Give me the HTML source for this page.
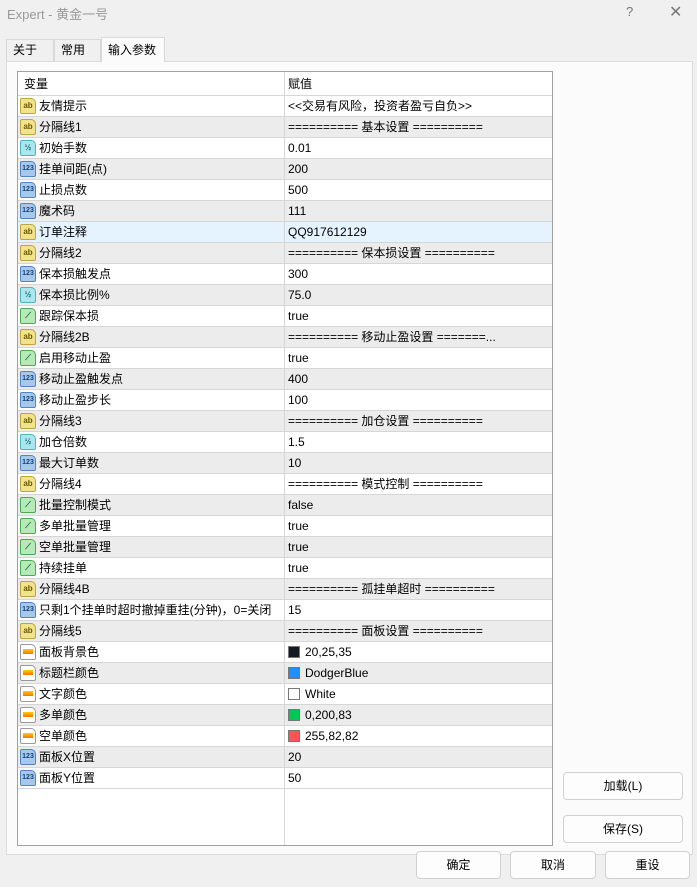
<!DOCTYPE html>
<html><head><meta charset="utf-8"><style>
*{box-sizing:border-box;margin:0;padding:0}
body{width:697px;height:887px;background:#f0f0f0;font-family:"Liberation Sans","Noto Sans CJK SC",sans-serif;font-size:12px;color:#000;position:relative;overflow:hidden}
.title{position:absolute;left:7px;top:4px;color:#999;font-size:13px}
.tq{position:absolute;left:626px;top:4px;color:#777;font-size:13px}
.tx{position:absolute;left:669px;top:2px;color:#777;font-size:16px}
.tab{position:absolute;top:39px;height:22px;border:1px solid #d9d9d9;border-bottom:none;background:#f0f0f0;padding:0 6px;line-height:21px;font-size:12px}
.tab.act{background:#fbfbfb;top:37px;height:25px;line-height:24px}
.panel{position:absolute;left:6px;top:61px;width:687px;height:794px;background:#fbfbfb;border:1px solid #dcdcdc}
.tbl{position:absolute;left:17px;top:71px;width:536px;height:775px;background:#fff;border:1px solid #a0a0a0}
.row{position:absolute;left:0;width:534px;height:21px;border-bottom:1px solid #d6d6d6;line-height:20px}
.row.g{background:#ececec}
.row.sel{background:#e5f3ff}
.c1{position:absolute;left:21px;top:0;white-space:nowrap;line-height:20px}
.c2{position:absolute;left:270px;top:0;white-space:nowrap;line-height:20px}
.div{position:absolute;left:266px;top:0;width:1px;height:773px;background:#d6d6d6}
.ic{position:absolute;left:2px;top:2px;width:16px;height:16px;border-radius:2px 5px 2px 2px;font-size:8px;font-weight:bold;text-align:center;line-height:14px;font-style:normal}
.y{background:#f1e28c;border:1px solid #c0a440;color:#6b5400}
.c{background:#a9e6ee;border:1px solid #4fb3c2;color:#1b6d7a}
.b{background:#a7c8ea;border:1px solid #4f86c0;color:#10427a;font-size:7px}
.gr{background:#b6e8b9;border:1px solid #4aaa52;color:#116b18}
.o{background:#fff;border:1px solid #999}
.o::after{content:"";position:absolute;left:2px;top:4px;width:10px;height:5px;background:linear-gradient(#ffd000,#ff7000)}
.sw{display:inline-block;width:12px;height:12px;border:1px solid #777;vertical-align:-2px;margin-right:5px}
.btn{position:absolute;height:28px;border:1px solid #d0d0d0;border-radius:4px;background:#fdfdfd;text-align:center;line-height:26px;font-size:12px}
</style></head><body>
<div class="title">Expert - 黄金一号</div>
<div class="tq">?</div><div class="tx">✕</div>
<div class="tab" style="left:6px;width:48px">关于</div>
<div class="tab" style="left:54px;width:47px">常用</div>
<div class="panel"></div>
<div class="tab act" style="left:101px;width:64px">输入参数</div>
<div class="tbl">
<div class="row" style="top:0;height:24px;line-height:24px"><span class="c1" style="left:6px;line-height:24px">变量</span><span class="c2" style="line-height:24px">赋值</span></div>
<div class="row" style="top:24px"><i class="ic y">ab</i><span class="c1">友情提示</span><span class="c2">&lt;&lt;交易有风险，投资者盈亏自负&gt;&gt;</span></div>
<div class="row g" style="top:45px"><i class="ic y">ab</i><span class="c1">分隔线1</span><span class="c2">========== 基本设置 ==========</span></div>
<div class="row" style="top:66px"><i class="ic c">½</i><span class="c1">初始手数</span><span class="c2">0.01</span></div>
<div class="row g" style="top:87px"><i class="ic b">123</i><span class="c1">挂单间距(点)</span><span class="c2">200</span></div>
<div class="row" style="top:108px"><i class="ic b">123</i><span class="c1">止损点数</span><span class="c2">500</span></div>
<div class="row g" style="top:129px"><i class="ic b">123</i><span class="c1">魔术码</span><span class="c2">111</span></div>
<div class="row sel" style="top:150px"><i class="ic y">ab</i><span class="c1">订单注释</span><span class="c2">QQ917612129</span></div>
<div class="row g" style="top:171px"><i class="ic y">ab</i><span class="c1">分隔线2</span><span class="c2">========== 保本损设置 ==========</span></div>
<div class="row" style="top:192px"><i class="ic b">123</i><span class="c1">保本损触发点</span><span class="c2">300</span></div>
<div class="row g" style="top:213px"><i class="ic c">½</i><span class="c1">保本损比例%</span><span class="c2">75.0</span></div>
<div class="row" style="top:234px"><i class="ic gr">⟋</i><span class="c1">跟踪保本损</span><span class="c2">true</span></div>
<div class="row g" style="top:255px"><i class="ic y">ab</i><span class="c1">分隔线2B</span><span class="c2">========== 移动止盈设置 =======...</span></div>
<div class="row" style="top:276px"><i class="ic gr">⟋</i><span class="c1">启用移动止盈</span><span class="c2">true</span></div>
<div class="row g" style="top:297px"><i class="ic b">123</i><span class="c1">移动止盈触发点</span><span class="c2">400</span></div>
<div class="row" style="top:318px"><i class="ic b">123</i><span class="c1">移动止盈步长</span><span class="c2">100</span></div>
<div class="row g" style="top:339px"><i class="ic y">ab</i><span class="c1">分隔线3</span><span class="c2">========== 加仓设置 ==========</span></div>
<div class="row" style="top:360px"><i class="ic c">½</i><span class="c1">加仓倍数</span><span class="c2">1.5</span></div>
<div class="row g" style="top:381px"><i class="ic b">123</i><span class="c1">最大订单数</span><span class="c2">10</span></div>
<div class="row" style="top:402px"><i class="ic y">ab</i><span class="c1">分隔线4</span><span class="c2">========== 模式控制 ==========</span></div>
<div class="row g" style="top:423px"><i class="ic gr">⟋</i><span class="c1">批量控制模式</span><span class="c2">false</span></div>
<div class="row" style="top:444px"><i class="ic gr">⟋</i><span class="c1">多单批量管理</span><span class="c2">true</span></div>
<div class="row g" style="top:465px"><i class="ic gr">⟋</i><span class="c1">空单批量管理</span><span class="c2">true</span></div>
<div class="row" style="top:486px"><i class="ic gr">⟋</i><span class="c1">持续挂单</span><span class="c2">true</span></div>
<div class="row g" style="top:507px"><i class="ic y">ab</i><span class="c1">分隔线4B</span><span class="c2">========== 孤挂单超时 ==========</span></div>
<div class="row" style="top:528px"><i class="ic b">123</i><span class="c1">只剩1个挂单时超时撤掉重挂(分钟)，0=关闭</span><span class="c2">15</span></div>
<div class="row g" style="top:549px"><i class="ic y">ab</i><span class="c1">分隔线5</span><span class="c2">========== 面板设置 ==========</span></div>
<div class="row" style="top:570px"><i class="ic o"></i><span class="c1">面板背景色</span><span class="c2"><i class="sw" style="background:#141923"></i>20,25,35</span></div>
<div class="row g" style="top:591px"><i class="ic o"></i><span class="c1">标题栏颜色</span><span class="c2"><i class="sw" style="background:#1e90ff"></i>DodgerBlue</span></div>
<div class="row" style="top:612px"><i class="ic o"></i><span class="c1">文字颜色</span><span class="c2"><i class="sw" style="background:#fff"></i>White</span></div>
<div class="row g" style="top:633px"><i class="ic o"></i><span class="c1">多单颜色</span><span class="c2"><i class="sw" style="background:#00c853"></i>0,200,83</span></div>
<div class="row" style="top:654px"><i class="ic o"></i><span class="c1">空单颜色</span><span class="c2"><i class="sw" style="background:#ff5252"></i>255,82,82</span></div>
<div class="row g" style="top:675px"><i class="ic b">123</i><span class="c1">面板X位置</span><span class="c2">20</span></div>
<div class="row" style="top:696px"><i class="ic b">123</i><span class="c1">面板Y位置</span><span class="c2">50</span></div>
<div class="div"></div>
</div>
<div class="btn" style="left:563px;top:772px;width:120px">加载(L)</div>
<div class="btn" style="left:563px;top:815px;width:120px">保存(S)</div>
<div class="btn" style="left:416px;top:851px;width:85px">确定</div>
<div class="btn" style="left:510px;top:851px;width:86px">取消</div>
<div class="btn" style="left:605px;top:851px;width:85px">重设</div>
</body></html>
